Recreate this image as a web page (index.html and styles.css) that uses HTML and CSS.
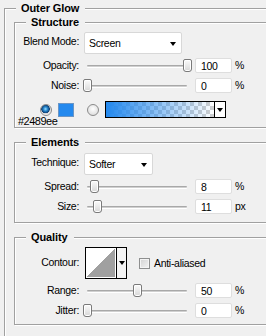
FILE: index.html
```html
<!DOCTYPE html>
<html lang="en">
<head>
    <meta charset="UTF-8">
    <title>Outer Glow</title>
    <link rel="stylesheet" href="styles.css">
</head>
<body>
    <fieldset class="group outer">
        <legend>Outer Glow</legend>

        <!-- Structure -->
        <fieldset class="group first">
            <legend>Structure</legend>
            <div class="row tall top3">
                <span class="lbl up">Blend Mode:</span>
                <div class="select blend">Screen</div>
            </div>
            <div class="row top4">
                <span class="lbl">Opacity:</span>
                <div class="slider"><div class="track"></div><div class="thumb" style="left:99px"></div></div>
                <div class="num">100</div><span class="unit">%</span>
            </div>
            <div class="row">
                <span class="lbl">Noise:</span>
                <div class="slider"><div class="track"></div><div class="thumb" style="left:-1px"></div></div>
                <div class="num">0</div><span class="unit">%</span>
            </div>
            <div class="colors">
                <span class="radio on"></span>
                <span class="swatch"></span>
                <span class="radio"></span>
                <div class="gradient">
                    <div class="grad-fill"></div>
                    <div class="grad-btn"></div>
                </div>
            </div>
            <div class="hex">#2489ee</div>
        </fieldset>

        <!-- Elements -->
        <fieldset class="group elements">
            <legend>Elements</legend>
            <div class="row tall top4">
                <span class="lbl up">Technique:</span>
                <div class="select technique">Softer</div>
            </div>
            <div class="row top4">
                <span class="lbl">Spread:</span>
                <div class="slider"><div class="track"></div><div class="thumb" style="left:6px"></div></div>
                <div class="num">8</div><span class="unit">%</span>
            </div>
            <div class="row">
                <span class="lbl">Size:</span>
                <div class="slider"><div class="track"></div><div class="thumb" style="left:9px"></div></div>
                <div class="num">11</div><span class="unit">px</span>
            </div>
        </fieldset>

        <!-- Quality -->
        <fieldset class="group quality">
            <legend>Quality</legend>
            <div class="row contour-row top3">
                <span class="lbl">Contour:</span>
                <div class="contour">
                    <div class="curve"></div>
                    <div class="curve-btn"></div>
                </div>
                <span class="check"></span>
                <span class="check-label">Anti-aliased</span>
            </div>
            <div class="row top4">
                <span class="lbl">Range:</span>
                <div class="slider"><div class="track"></div><div class="thumb" style="left:49px"></div></div>
                <div class="num">50</div><span class="unit">%</span>
            </div>
            <div class="row">
                <span class="lbl">Jitter:</span>
                <div class="slider"><div class="track"></div><div class="thumb" style="left:-1px"></div></div>
                <div class="num">0</div><span class="unit">%</span>
            </div>
        </fieldset>
    </fieldset>
</body>
</html>
```

FILE: styles.css
```css
* {
    box-sizing: border-box;
}

body {
    margin: 0;
    width: 266px;
    height: 336px;
    overflow: hidden;
    background-color: #f0f0f0;
    font-family: "Liberation Sans", Arial, sans-serif;
    font-size: 10.5px;
    letter-spacing: -0.3px;
    color: #000;
}

/* etched group boxes */
.group {
    margin: 8px 0 0 0;
    padding: 0;
    min-width: 0;
    border: 1px solid #a0a0a0;
    box-shadow: inset 1px 1px 0 #fff, 1px 1px 0 #fff;
}

.group legend {
    margin-left: 11px;
    padding: 0 6px 0 5px;
    background-color: #f0f0f0;
    font-weight: bold;
    font-size: 11px;
    letter-spacing: -0.1px;
    line-height: 13px;
}

.outer {
    width: 330px;
    margin: 2px 0 0 4px;
    padding: 1px 0 30px 9px;
}

.outer > legend {
    margin-left: 2px;
}

.group.first {
    margin-top: 0;
}

.elements {
    padding-bottom: 8px;
}

.quality {
    padding-bottom: 6px;
}

/* rows */
.row {
    display: flex;
    align-items: center;
    height: 15px;
    margin-top: 5px;
}

.row.tall {
    height: 22px;
}

.top3 { margin-top: 3px; }
.top4 { margin-top: 4px; }

.lbl {
    flex: none;
    width: 64px;
    margin-right: 5px;
    text-align: right;
    line-height: 13px;
    padding-bottom: 1px;
}

.lbl.up {
    padding-bottom: 3px;
}

.select {
    position: relative;
    height: 22px;
    padding: 1px 0 0 4px;
    line-height: 19px;
    background-color: #fff;
    border: 1px solid #d8d8d8;
    border-radius: 2px;
}

.select::after {
    content: "";
    position: absolute;
    right: 5px;
    top: 9px;
    border-left: 3.5px solid transparent;
    border-right: 3.5px solid transparent;
    border-top: 4px solid #000;
}

.blend { width: 98px; }
.technique { width: 69px; }

/* slider */
.slider {
    position: relative;
    display: flex;
    align-items: center;
    width: 108px;
    height: 15px;
    margin-right: 3px;
    padding: 0 5px 0 3px;
}

.track {
    flex: 1;
    height: 2px;
    border-radius: 1px;
    background: linear-gradient(#a8a8a8 50%, #cfcfcf 50%);
    box-shadow: 0 1px 0 #fff;
}

.thumb {
    position: absolute;
    top: 1px;
    width: 9px;
    height: 13px;
    border: 1px solid #7a7a7a;
    border-radius: 2px 2px 3px 3px;
    background: linear-gradient(#fbfbfb, #e6e6e6 60%, #d6d6d6);
    box-shadow: inset 0 0 0 1px #fff;
}

.num {
    width: 37px;
    height: 15px;
    padding: 1px 0 0 5px;
    line-height: 12px;
    background-color: #fff;
    border: 1px solid #dedede;
    border-radius: 2px;
}

.unit {
    margin-left: 3px;
    padding-bottom: 2px;
}

/* colour choice */
.colors {
    display: flex;
    align-items: center;
    height: 17px;
    margin-top: 8px;
}

.radio {
    flex: none;
    width: 12px;
    height: 12px;
    margin-left: 25px;
    border: 1px solid #8a8a8a;
    border-radius: 50%;
    background: radial-gradient(circle at 50% 40%, #fff, #e2e2e2 70%, #cfcfcf);
}

.radio.on {
    background: radial-gradient(circle at 45% 40%, #9fe0ff 0, #2a8ad0 2px, #0d3f74 4px, #d6d6d6 4.5px, #f4f4f4 6px);
}

.swatch {
    width: 16px;
    height: 14px;
    margin-left: 6px;
    background-color: #2489ee;
    border: 1px solid #6b95c4;
}

.colors .radio + .radio,
.swatch + .radio {
    margin-left: 13px;
}

.gradient {
    display: flex;
    width: 121px;
    height: 17px;
    margin-left: 6px;
    border: 1px solid #000;
    background-color: #fff;
}

.grad-fill {
    width: 108px;
    background:
        linear-gradient(to right, #2489ee, rgba(36, 137, 238, 0)),
        repeating-conic-gradient(#cfcfcf 0 25%, #fff 0 50%) 0 0 / 8px 8px;
}

.grad-btn {
    position: relative;
    flex: 1;
    border-left: 1px solid #000;
}

.grad-btn::after,
.curve-btn::after {
    content: "";
    position: absolute;
    left: 2px;
    top: 6px;
    border-left: 3px solid transparent;
    border-right: 3px solid transparent;
    border-top: 4px solid #000;
}

.hex {
    margin: -1px 0 0 3px;
    padding-bottom: 1px;
    font-size: 11px;
    letter-spacing: -0.5px;
    line-height: 9px;
}

/* contour */
.contour-row {
    height: 32px;
}

.contour {
    display: flex;
    width: 42px;
    height: 32px;
    margin-left: 1px;
    border: 1px solid #000;
    background-color: #fff;
}

.curve {
    width: 30px;
    border: 1px solid #fff;
    background: linear-gradient(to bottom right, #fff 50%, #a0a0a0 50%);
}

.curve-btn {
    position: relative;
    flex: 1;
    border-left: 1px solid #000;
    background-color: #f4f4f4;
}

.curve-btn::after {
    left: 2px;
    top: 13px;
}

.check {
    width: 11px;
    height: 11px;
    margin-left: 12px;
    border: 1px solid #8e8f8f;
    background: linear-gradient(135deg, #d2d2d2, #f4f4f4);
    box-shadow: inset 0 0 0 1px #f4f4f4;
}

.check-label {
    margin-left: 4px;
    padding-bottom: 1px;
}
```
